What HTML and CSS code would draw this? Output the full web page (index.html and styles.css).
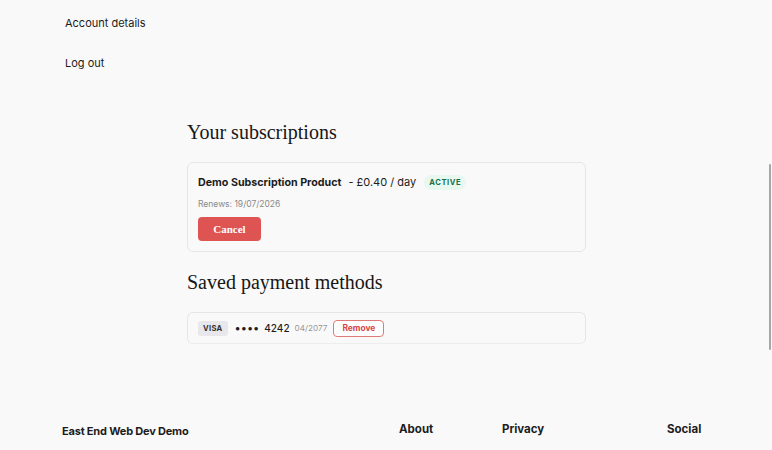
FILE: index.html
```html
<!doctype html>
<html lang="en">
<head>
  <meta charset="utf-8">
  <meta name="viewport" content="width=device-width, initial-scale=1.0">
  <title>My account</title>
  <link rel="stylesheet" href="styles.css">
</head>
<body>

<nav class="account-nav">
  <a href="#">Account details</a>
  <a href="#">Log out</a>
</nav>

<main class="account-main">
  <h2 class="section-title">Your subscriptions</h2>

  <div class="card sub-card">
    <div class="sub-head">
      <span class="sub-name">Demo Subscription Product</span>
      <span class="sub-price">- £0.40 / day</span>
      <span class="badge-active">ACTIVE</span>
    </div>
    <p class="sub-renews">Renews: 19/07/2026</p>
    <button class="btn-cancel">Cancel</button>
  </div>

  <h2 class="section-title">Saved payment methods</h2>

  <div class="card pm-card">
    <span class="pm-brand">VISA</span>
    <span class="pm-dots">&bull;&bull;&bull;&bull;</span>
    <span class="pm-last4">4242</span>
    <span class="pm-exp">04/2077</span>
    <button class="btn-remove">Remove</button>
  </div>
</main>

<footer class="site-footer">
  <div class="footer-brand">East End Web Dev Demo</div>
  <div class="footer-col about">About</div>
  <div class="footer-col privacy">Privacy</div>
  <div class="footer-col social">Social</div>
</footer>

<div class="scroll-thumb"></div>

</body>
</html>
```

FILE: styles.css
```css
body {
  margin: 0;
  background: #f9f9f9;
  color: #1c1c1c;
  font-family: Inter, "Liberation Sans", sans-serif;
  height: 450px;
  overflow: hidden;
}

a {
  color: inherit;
  text-decoration: none;
}

/* side links */
.account-nav {
  display: flex;
  flex-direction: column;
  gap: 24px;
  padding: 15px 0 0 65px;
  font-size: 11px;
  line-height: 16px;
}

/* main column */
.account-main {
  width: 399px;
  margin: 49px 0 0 187px;
}

.section-title {
  font-family: "Liberation Serif", serif;
  font-weight: normal;
  font-size: 20px;
  line-height: 24px;
  margin: 0 0 18px;
  color: #161616;
}

.card {
  border: 1px solid #e6e6e6;
  border-radius: 6px;
  background: #f9f9f9;
}

.sub-card {
  padding: 11px 10px 10px;
  margin-bottom: 18px;
}

.sub-head {
  display: flex;
  align-items: center;
  height: 16px;
}

.sub-name {
  font-weight: 700;
  font-size: 10.7px;
}

.sub-price {
  font-size: 11px;
  margin-left: 7px;
}

.badge-active {
  margin-left: 8px;
  background: #e9f8ef;
  color: #17714a;
  font-size: 7.6px;
  font-weight: 700;
  letter-spacing: 0.6px;
  padding: 3px 5px;
  border-radius: 8px;
}

.sub-renews {
  margin: 8px 0 7px;
  font-size: 8.5px;
  color: #8a8a8a;
  line-height: 12px;
}

.btn-cancel {
  display: block;
  width: 63px;
  height: 24px;
  border: 0;
  border-radius: 4px;
  background: #de5452;
  color: #fff;
  font-family: "Liberation Serif", serif;
  font-weight: 700;
  font-size: 11px;
}

.pm-card {
  display: flex;
  align-items: center;
  padding: 6px 10px 6px;
  height: 18px;
  border-bottom-color: #ededed;
}

.pm-brand {
  background: #e8e8ec;
  border-radius: 3px;
  font-size: 7.6px;
  font-weight: 700;
  letter-spacing: 0.3px;
  padding: 3px 5px;
  color: #333;
}

.pm-dots {
  margin-left: 7px;
  font-size: 11px;
  letter-spacing: 0;
}

.pm-last4 {
  margin-left: 5px;
  font-size: 10px;
  font-weight: 500;
}

.pm-exp {
  margin-left: 5px;
  font-size: 8.2px;
  color: #999;
}

.btn-remove {
  margin-left: 6px;
  height: 17px;
  padding: 0 8px;
  border: 1px solid #e07a78;
  border-radius: 4px;
  background: #fff;
  color: #d64545;
  font-family: Inter, sans-serif;
  font-size: 8.4px;
  font-weight: 700;
}

/* footer */
.site-footer {
  display: flex;
  align-items: baseline;
  margin-top: 78px;
  padding-left: 62px;
  font-weight: 700;
  font-size: 11.5px;
}

.footer-brand {
  width: 337px;
  font-size: 11px;
  letter-spacing: -0.2px;
  position: relative;
  top: 2px;
}

.footer-col.about { width: 103px; }
.footer-col.privacy { width: 165px; }

.scroll-thumb {
  position: fixed;
  right: 1px;
  top: 164px;
  width: 2px;
  height: 186px;
  background: #a9a5a5;
  border-radius: 1px;
}
```
